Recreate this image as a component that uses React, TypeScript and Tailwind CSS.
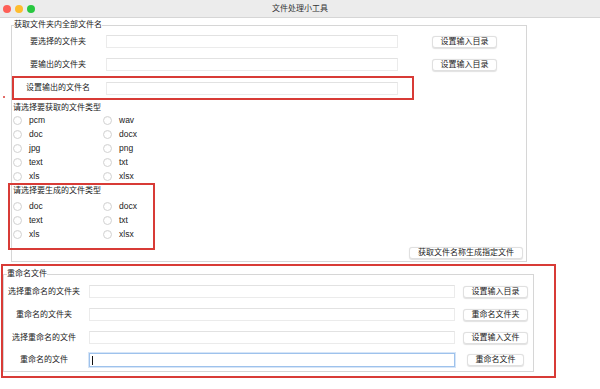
import type { ReactNode } from 'react'

const font = "font-['Liberation_Sans','Noto_Sans_CJK_SC',sans-serif]"

function TrafficLights() {
  return (
    <div className="flex items-center gap-[4px] pl-[3px]">
      <span className="h-[8px] w-[8px] rounded-full bg-[#fe5f57]" />
      <span className="h-[8px] w-[8px] rounded-full bg-[#febc2e]" />
      <span className="h-[8px] w-[8px] rounded-full bg-[#28c840]" />
    </div>
  )
}

function TextInput({ width, focused = false }: { width: string; focused?: boolean }) {
  if (focused) {
    return (
      <div
        className={`${width} flex h-[14px] items-center border border-[#9ec2ec] bg-white shadow-[0_0_0_1px_#d6e5f7]`}
      >
        <span className="ml-[2px] h-[9px] w-px bg-[#111]" />
      </div>
    )
  }
  return <div className={`${width} h-[13px] border border-[#ebebeb] border-t-[#e2e2e2] bg-white`} />
}

function Button({ width, children }: { width: string; children: ReactNode }) {
  return (
    <button
      type="button"
      className={`${width} flex h-[12px] items-center justify-center rounded-[3px] border border-[#e0e0e0] bg-white text-[8px] leading-none text-[#222] shadow-[0_0.5px_1px_rgba(0,0,0,0.12)]`}
    >
      {children}
    </button>
  )
}

function Radio({ label }: { label: string }) {
  return (
    <div className="flex h-[14px] items-center">
      <span className="h-[9px] w-[9px] rounded-full border border-[#d2d2d2] bg-white shadow-[inset_0_0.5px_1px_rgba(0,0,0,0.06)]" />
      <span className="ml-[7px] text-[8.5px] leading-none text-[#222]">{label}</span>
    </div>
  )
}

function RadioGrid({ items }: { items: string[] }) {
  return (
    <div className="grid grid-cols-[90px_90px] pl-[1px]">
      {items.map((item) => (
        <Radio key={item} label={item} />
      ))}
    </div>
  )
}

function PathRow({ label, button }: { label: string; button?: string }) {
  return (
    <div className="flex h-[23px] items-center pl-[4px]">
      <span className="w-[84px] text-center text-[8px] leading-none text-[#222]">{label}</span>
      <div className="ml-[6px]">
        <TextInput width="w-[292px]" />
      </div>
      {button && (
        <div className="ml-[34px]">
          <Button width="w-[65px]">{button}</Button>
        </div>
      )}
    </div>
  )
}

const renameRows = [
  { label: '选择重命名的文件夹', button: '设置输入目录', width: 'w-[65px]' },
  { label: '重命名的文件夹', button: '重命名文件夹', width: 'w-[65px]' },
  { label: '选择重命名的文件', button: '设置输入文件', width: 'w-[65px]' },
  { label: '重命名的文件', button: '重命名文件', width: 'w-[57px]' },
]

export default function App() {
  return (
    <div className={`relative h-[389px] w-[600px] overflow-hidden bg-white ${font} text-[#222]`}>
      <div className="grid h-[18px] grid-cols-[1fr_auto_1fr] items-center border-b border-[#d6d6d6] bg-[#ececec]">
        <TrafficLights />
        <span className="text-[8px] leading-none text-[#333]">文件处理小工具</span>
        <span />
      </div>

      {/* tiny red annotation mark */}
      <span className="absolute left-[3px] top-[96px] h-[2px] w-[2px] rounded-full bg-[#d83b36]" />

      <fieldset className="ml-[11px] mt-[2px] w-[516px] min-w-0 border border-[#d6d6d6]">
        <legend className="ml-[2px] text-[8px] leading-[10px]">获取文件夹内全部文件名</legend>

        <PathRow label="要选择的文件夹" button="设置输入目录" />
        <PathRow label="要输出的文件夹" button="设置输入目录" />

        <div className="flex h-[24px] w-[402px] items-center border-2 border-[#d83b36] pl-[2px]">
          <span className="w-[84px] text-center text-[8px] leading-none">设置输出的文件名</span>
          <div className="ml-[6px]">
            <TextInput width="w-[292px]" />
          </div>
        </div>

        <div className="mt-[3px] pl-[1px] text-[8px] leading-[10px]">请选择要获取的文件类型</div>
        <RadioGrid items={['pcm', 'wav', 'doc', 'docx', 'jpg', 'png', 'text', 'txt', 'xls', 'xlsx']} />

        <div className="-ml-[4px] w-[147px] border-2 border-[#d83b36] pb-[7px] pl-[3px] pt-[1px]">
          <div className="text-[8px] leading-[10px]">请选择要生成的文件类型</div>
          <div className="mt-[3px] -ml-[1px]">
            <RadioGrid items={['doc', 'docx', 'text', 'txt', 'xls', 'xlsx']} />
          </div>
        </div>

        <div className="-mt-[3px] flex justify-end pb-[2px] pr-[3px]">
          <Button width="w-[114px]">获取文件名称生成指定文件</Button>
        </div>
      </fieldset>

      <div className="ml-[1px] mt-[2px] w-[555px] border-2 border-[#d83b36] pb-[4px] pt-[3px]">
        <fieldset className="w-[531px] min-w-0 border border-[#d6d6d6] pt-[1px]">
          <legend className="ml-[3px] text-[8px] leading-[10px]">重命名文件</legend>
          {renameRows.map((row, i) => (
            <div key={row.label} className={`flex items-center ${i === 3 ? 'h-[22px]' : 'h-[23px]'}`}>
              <span className="w-[80px] text-center text-[8px] leading-none">{row.label}</span>
              <div className="ml-[5px]">
                <TextInput width="w-[366px]" focused={i === 3} />
              </div>
              <div className="ml-[8px] flex w-[65px] justify-center">
                <Button width={row.width}>{row.button}</Button>
              </div>
            </div>
          ))}
        </fieldset>
      </div>
    </div>
  )
}
